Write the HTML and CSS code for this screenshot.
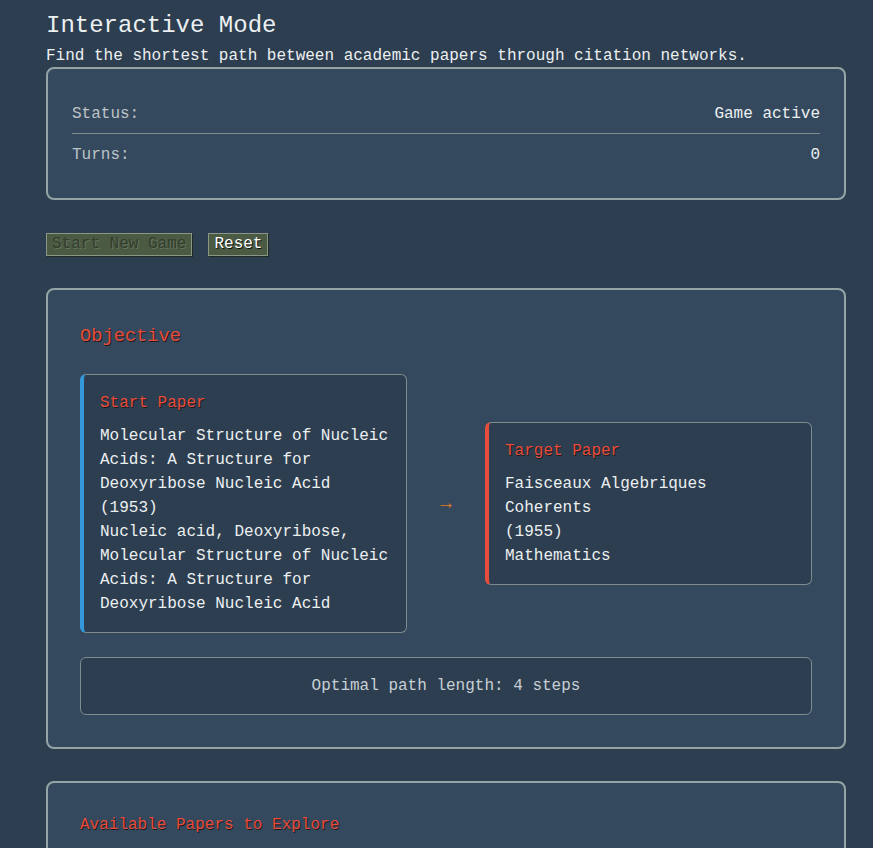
FILE: index.html
```html
<!DOCTYPE html>
<html lang="en">
<head>
<meta charset="utf-8">
<title>Interactive Mode</title>
<link rel="stylesheet" href="styles.css">
</head>
<body>
<div class="page">
  <h1 class="title">Interactive Mode</h1>
  <p class="subtitle">Find the shortest path between academic papers through citation networks.</p>

  <section class="card status-card">
    <div class="status-row"><span class="label">Status:</span><span class="value">Game active</span></div>
    <div class="status-row"><span class="label">Turns:</span><span class="value">0</span></div>
  </section>

  <div class="controls">
    <button class="btn" disabled>Start New Game</button>
    <button class="btn">Reset</button>
  </div>

  <section class="card objective-card">
    <h3 class="section-title">Objective</h3>
    <div class="papers">
      <div class="paper paper-start">
        <h4 class="paper-title">Start Paper</h4>
        <div class="paper-body">
          <div>Molecular Structure of Nucleic Acids: A Structure for Deoxyribose Nucleic Acid</div>
          <div>(1953)</div>
          <div>Nucleic acid, Deoxyribose, Molecular Structure of Nucleic Acids: A Structure for Deoxyribose Nucleic Acid</div>
        </div>
      </div>
      <div class="arrow">→</div>
      <div class="paper paper-target">
        <h4 class="paper-title">Target Paper</h4>
        <div class="paper-body">
          <div>Faisceaux Algebriques Coherents</div>
          <div>(1955)</div>
          <div>Mathematics</div>
        </div>
      </div>
    </div>
    <div class="optimal">Optimal path length: 4 steps</div>
  </section>

  <section class="card explore-card">
    <h4 class="explore-title">Available Papers to Explore</h4>
  </section>
</div>
</body>
</html>
```

FILE: styles.css
```css
html, body {
  margin: 0;
  padding: 0;
  background: #2c3e50;
  color: #ecf0f1;
  font-family: "Liberation Mono", "Courier New", monospace;
  font-size: 16px;
}

.page {
  width: 800px;
  padding: 12px 0 0 46px;
}

.title {
  margin: 0;
  font-size: 24px;
  font-weight: normal;
  line-height: 27px;
  color: #ecf0f1;
}

.subtitle {
  margin: 8px 0 2px 0;
  font-size: 16px;
  line-height: 18px;
  color: #ecf0f1;
}

.card {
  background: #34495e;
  border: 2px solid #95a5a6;
  border-radius: 8px;
  box-sizing: border-box;
}

.status-card {
  padding: 24px 24px 24px 24px;
}

.status-row {
  display: flex;
  justify-content: space-between;
  padding: 12px 0 9px 0;
  line-height: 19px;
}

.status-row + .status-row {
  border-top: 1px solid #7f8c8d;
}

.status-row .label {
  color: #bdc3c7;
}

.status-row .value {
  color: #ecf0f1;
}

.controls {
  display: flex;
  gap: 16px;
  margin: 33px 0 32px 0;
}

.btn {
  font-family: "Liberation Mono", "Courier New", monospace;
  font-size: 16px;
  line-height: 19px;
  padding: 1px 5px;
  background: #4b5a43;
  border: 1px solid #8a9686;
  box-shadow: 1px 1px 0 #1e2a22;
  color: #ffffff;
  text-shadow: 1px 1px 0 #111;
  border-radius: 0;
  cursor: pointer;
}

.btn:disabled {
  color: #323d2d;
  text-shadow: 1px 1px 0 #67745d;
  cursor: default;
}

.objective-card {
  padding: 34px 32px 32px 32px;
}

.section-title {
  margin: 0 0 26px 0;
  font-size: 18.72px;
  line-height: 24px;
  font-weight: normal;
  color: #e74c3c;
  text-shadow: 1px 1px 0 #1b1b1b;
}

.papers {
  display: grid;
  grid-template-columns: 1fr 78px 1fr;
  align-items: center;
}

.paper {
  background: #2c3e50;
  border: 1px solid #7f8c8d;
  border-radius: 6px;
  padding: 16px 16px 16px 16px;
}

.paper-start {
  border-left: 4px solid #3498db;
}

.paper-target {
  border-left: 4px solid #e74c3c;
}

.paper-title {
  margin: 0 0 9px 0;
  font-size: 16px;
  line-height: 24px;
  font-weight: normal;
  color: #e74c3c;
  text-shadow: 1px 1px 0 #1b1b1b;
}

.paper-body {
  line-height: 24px;
  color: #ecf0f1;
}

.arrow {
  text-align: center;
  color: #e67e22;
  font-size: 19px;
  line-height: 24px;
}

.optimal {
  margin-top: 24px;
  background: #2c3e50;
  border: 1px solid #7f8c8d;
  border-radius: 6px;
  padding: 16px;
  line-height: 24px;
  text-align: center;
  color: #c8d0d4;
}

.explore-card {
  margin-top: 32px;
  padding: 32px;
  min-height: 120px;
}

.explore-title {
  margin: 0;
  font-size: 16px;
  line-height: 20px;
  font-weight: normal;
  color: #e74c3c;
  text-shadow: 1px 1px 0 #1b1b1b;
}
```
